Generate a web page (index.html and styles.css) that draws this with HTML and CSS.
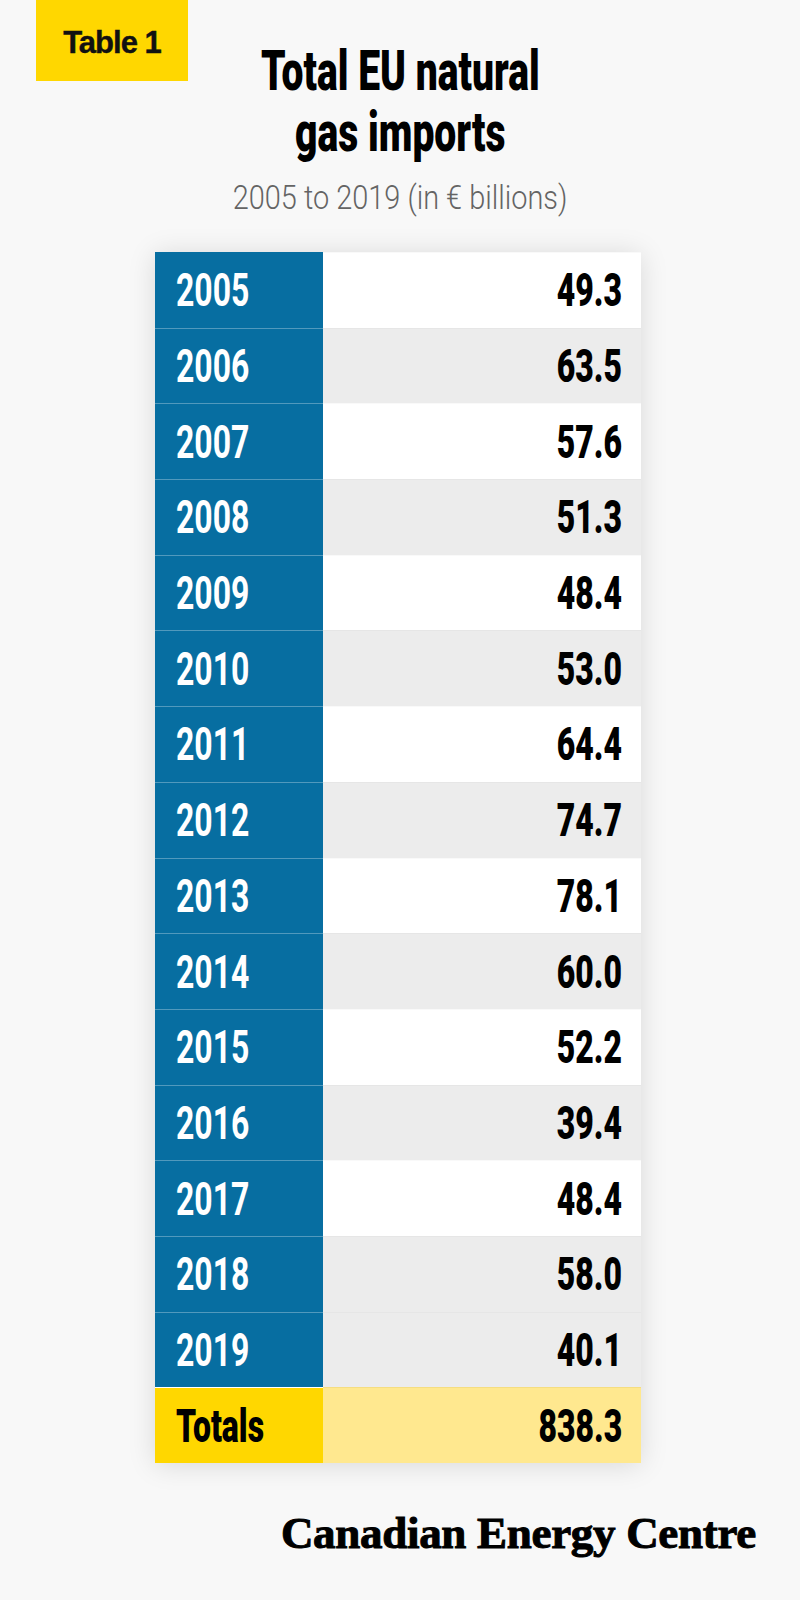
FILE: index.html
```html
<!DOCTYPE html>
<html lang="en">
<head>
<meta charset="utf-8">
<title>Total EU natural gas imports</title>
<link rel="stylesheet" href="styles.css">
</head>
<body>
<div class="page">
  <header class="head">
    <div class="badge">Table 1</div>
    <div class="titles">
      <h1 class="title"><span>Total EU natural</span><span>gas imports</span></h1>
      <p class="sub"><span>2005 to 2019 (in € billions)</span></p>
    </div>
  </header>

  <div class="table">
    <div class="row"><div class="yr"><span class="c">2005</span></div><div class="val"><span class="c">49.3</span></div></div>
    <div class="row alt"><div class="yr"><span class="c">2006</span></div><div class="val"><span class="c">63.5</span></div></div>
    <div class="row"><div class="yr"><span class="c">2007</span></div><div class="val"><span class="c">57.6</span></div></div>
    <div class="row alt"><div class="yr"><span class="c">2008</span></div><div class="val"><span class="c">51.3</span></div></div>
    <div class="row"><div class="yr"><span class="c">2009</span></div><div class="val"><span class="c">48.4</span></div></div>
    <div class="row alt"><div class="yr"><span class="c">2010</span></div><div class="val"><span class="c">53.0</span></div></div>
    <div class="row"><div class="yr"><span class="c">2011</span></div><div class="val"><span class="c">64.4</span></div></div>
    <div class="row alt"><div class="yr"><span class="c">2012</span></div><div class="val"><span class="c">74.7</span></div></div>
    <div class="row"><div class="yr"><span class="c">2013</span></div><div class="val"><span class="c">78.1</span></div></div>
    <div class="row alt"><div class="yr"><span class="c">2014</span></div><div class="val"><span class="c">60.0</span></div></div>
    <div class="row"><div class="yr"><span class="c">2015</span></div><div class="val"><span class="c">52.2</span></div></div>
    <div class="row alt"><div class="yr"><span class="c">2016</span></div><div class="val"><span class="c">39.4</span></div></div>
    <div class="row"><div class="yr"><span class="c">2017</span></div><div class="val"><span class="c">48.4</span></div></div>
    <div class="row alt"><div class="yr"><span class="c">2018</span></div><div class="val"><span class="c">58.0</span></div></div>
    <div class="row alt"><div class="yr"><span class="c">2019</span></div><div class="val"><span class="c">40.1</span></div></div>
    <div class="row total"><div class="yr"><span class="c">Totals</span></div><div class="val"><span class="c">838.3</span></div></div>
  </div>

  <footer class="brand">Canadian Energy Centre</footer>
</div>
</body>
</html>
```

FILE: styles.css
```css
html, body {
  margin: 0;
  padding: 0;
  background: #f8f8f8;
}

.page {
  width: 800px;
  min-height: 1600px;
  background: #f8f8f8;
  display: flex;
  flex-direction: column;
}

.head {
  display: grid;
  grid-template-columns: 1fr auto 1fr;
  align-items: start;
}

.badge {
  grid-column: 1;
  justify-self: start;
  margin-left: 36px;
  width: 152px;
  height: 81px;
  box-sizing: border-box;
  padding-top: 5px;
  background: #ffd700;
  display: flex;
  align-items: center;
  justify-content: center;
  font-family: "Liberation Sans", Arial, sans-serif;
  font-weight: 700;
  font-size: 31px;
  letter-spacing: -1px;
  color: #111;
  -webkit-text-stroke: 0.4px #111;
}

.titles {
  grid-column: 2;
  display: flex;
  flex-direction: column;
  align-items: center;
}

.title {
  margin: 41px 0 0;
  font-family: Roboto, "Liberation Sans", sans-serif;
  font-weight: 900;
  font-size: 55px;
  line-height: 61px;
  color: #000;
  text-align: center;
  transform: scaleX(0.71);
  transform-origin: center;
  white-space: nowrap;
}

.title span {
  display: block;
}

.sub {
  margin: 15px 0 0;
  font-family: Roboto, "Liberation Sans", sans-serif;
  font-weight: 300;
  font-size: 32.5px;
  line-height: 40px;
  color: #646464;
  white-space: nowrap;
  transform: scaleX(0.89);
  transform-origin: center;
}

.table {
  margin: 34px 0 0 155px;
  width: 486px;
  box-shadow: 0 2px 26px rgba(0, 0, 0, 0.13);
  display: flex;
  flex-direction: column;
}

.row {
  display: grid;
  grid-template-columns: 168px 1fr;
  height: 75.7px;
  background: #ffffff;
}

.row.alt {
  background: #ececec;
}

.yr {
  background: #076ea1;
  color: #ffffff;
  display: flex;
  align-items: center;
  padding-left: 21px;
  box-shadow: inset 0 1px 0 rgba(255, 255, 255, 0.3);
  font-family: Roboto, "Liberation Sans", sans-serif;
  font-weight: 700;
  font-size: 47px;
}

.row:first-child .yr {
  box-shadow: none;
}

.val {
  display: flex;
  align-items: center;
  justify-content: flex-end;
  padding-right: 19px;
  box-shadow: inset 0 1px 0 rgba(0, 0, 0, 0.025);
  font-family: Roboto, "Liberation Sans", sans-serif;
  font-weight: 900;
  font-size: 47px;
  color: #000;
}

.c {
  display: inline-block;
  transform: scaleX(0.68);
  line-height: 1;
}

.yr .c {
  transform-origin: left center;
}

.val .c {
  transform-origin: right center;
}

.row.total {
  background: #ffe88f;
}

.row.total .yr {
  background: #ffd700;
  color: #000;
  font-weight: 900;
  box-shadow: inset 0 1px 0 #ffffff;
}

.row.total .val {
  box-shadow: inset 0 1px 0 rgba(200, 170, 60, 0.18);
}

.brand {
  margin-top: 45px;
  padding-right: 44px;
  text-align: right;
  font-family: "Liberation Serif", "Times New Roman", serif;
  font-weight: 700;
  font-size: 45px;
  line-height: 50px;
  letter-spacing: -0.3px;
  color: #000;
  -webkit-text-stroke: 1px #000;
}
```
